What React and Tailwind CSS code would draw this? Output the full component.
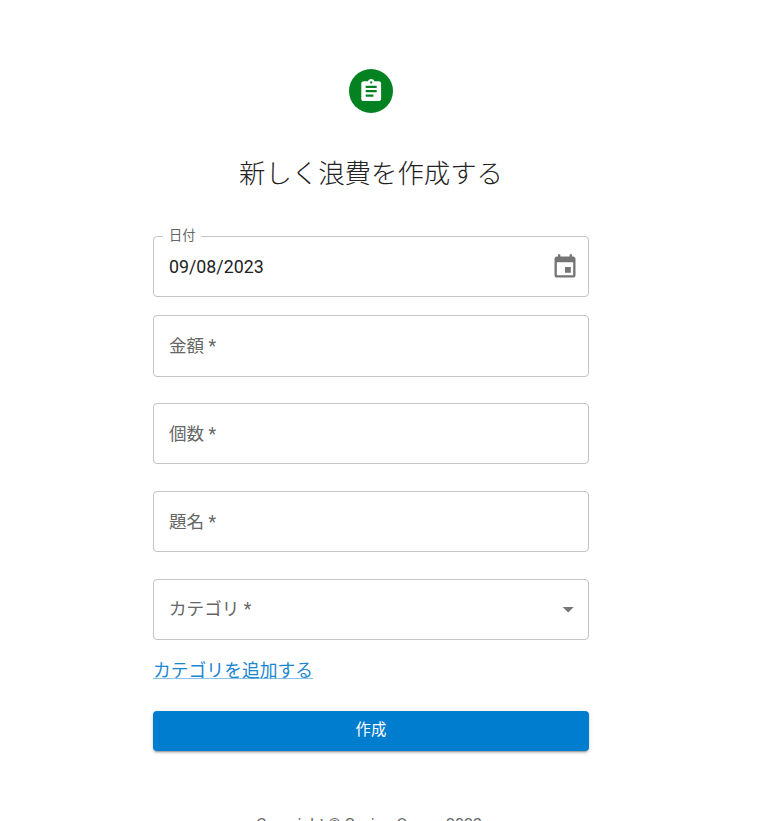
const fontStack = "font-['Roboto','Noto_Sans_CJK_JP',sans-serif]";

const TextField = ({ label, className = "", children }) => (
  <div
    className={`flex items-center justify-between rounded border border-[#c4c4c4] pl-[15px] pr-[7px] ${className}`}
  >
    <span className="text-[17.6px] text-[#666666]">{label}</span>
    {children}
  </div>
);

const App = () => {
  return (
    <div className={`w-[742px] bg-white ${fontStack}`}>
      <div className="mx-auto flex w-[436px] flex-col items-center pt-[69px]">
        <div className="flex h-[44px] w-[44px] items-center justify-center rounded-full bg-[#048121]">
          <svg viewBox="0 0 24 24" className="h-[26.4px] w-[26.4px] fill-white">
            <path d="M19 3h-4.18C14.4 1.84 13.3 1 12 1c-1.3 0-2.4.84-2.82 2H5c-1.1 0-2 .9-2 2v14c0 1.1.9 2 2 2h14c1.1 0 2-.9 2-2V5c0-1.1-.9-2-2-2zm-7 0c.55 0 1 .45 1 1s-.45 1-1 1-1-.45-1-1 .45-1 1-1zm2 14H7v-2h7v2zm3-4H7v-2h10v2zm0-4H7V7h10v2z" />
          </svg>
        </div>

        <h1 className="mt-[42px] text-[26.4px] leading-[38px] font-light text-[#222222]">
          新しく浪費を作成する
        </h1>

        <div className="relative mt-[43px] flex h-[61px] w-full items-center justify-between rounded border border-[#c4c4c4] pl-[15px] pr-[9px]">
          <span className="absolute -top-[9px] left-[9px] bg-white px-[6px] text-[13.2px] leading-[16px] text-[#666666]">
            日付
          </span>
          <span className="mt-[2px] text-[17.8px] text-[#222222]">09/08/2023</span>
          <svg viewBox="0 0 24 24" className="h-7 w-7 fill-[#757575]">
            <path d="M17 12h-5v5h5v-5zM16 1v2H8V1H6v2H5c-1.11 0-1.99.9-1.99 2L3 19c0 1.1.89 2 2 2h14c1.1 0 2-.9 2-2V5c0-1.1-.9-2-2-2h-1V1h-2zm3 18H5V8h14v11z" />
          </svg>
        </div>

        <TextField label="金額 *" className="mt-[18px] h-[62px] w-full" />
        <TextField label="個数 *" className="mt-[26px] h-[61px] w-full pt-[2px]" />
        <TextField label="題名 *" className="mt-[27px] h-[61px] w-full pt-[2px]" />
        <TextField label="カテゴリ *" className="mt-[27px] h-[61px] w-full">
          <svg viewBox="0 0 24 24" className="h-[26.4px] w-[26.4px] fill-[#757575]">
            <path d="M7 10l5 5 5-5z" />
          </svg>
        </TextField>

        <a className="mt-[18px] self-start text-[17.8px] leading-[26px] text-[#1a86d0] underline decoration-[#8ac3e8]">
          カテゴリを追加する
        </a>

        <button className="mt-[27px] h-[40px] w-full rounded bg-[#007dcf] text-[15.4px] font-normal text-white shadow-[0_3px_1px_-2px_rgba(0,0,0,0.2),0_2px_2px_0_rgba(0,0,0,0.14),0_1px_5px_0_rgba(0,0,0,0.12)]">
          作成
        </button>

        <p className="mt-[64px] pb-10 pr-[4px] text-base leading-[20px] text-[#666666]">
          Copyright © Saving Queen 2023
        </p>
      </div>
    </div>
  );
};

export default App;
